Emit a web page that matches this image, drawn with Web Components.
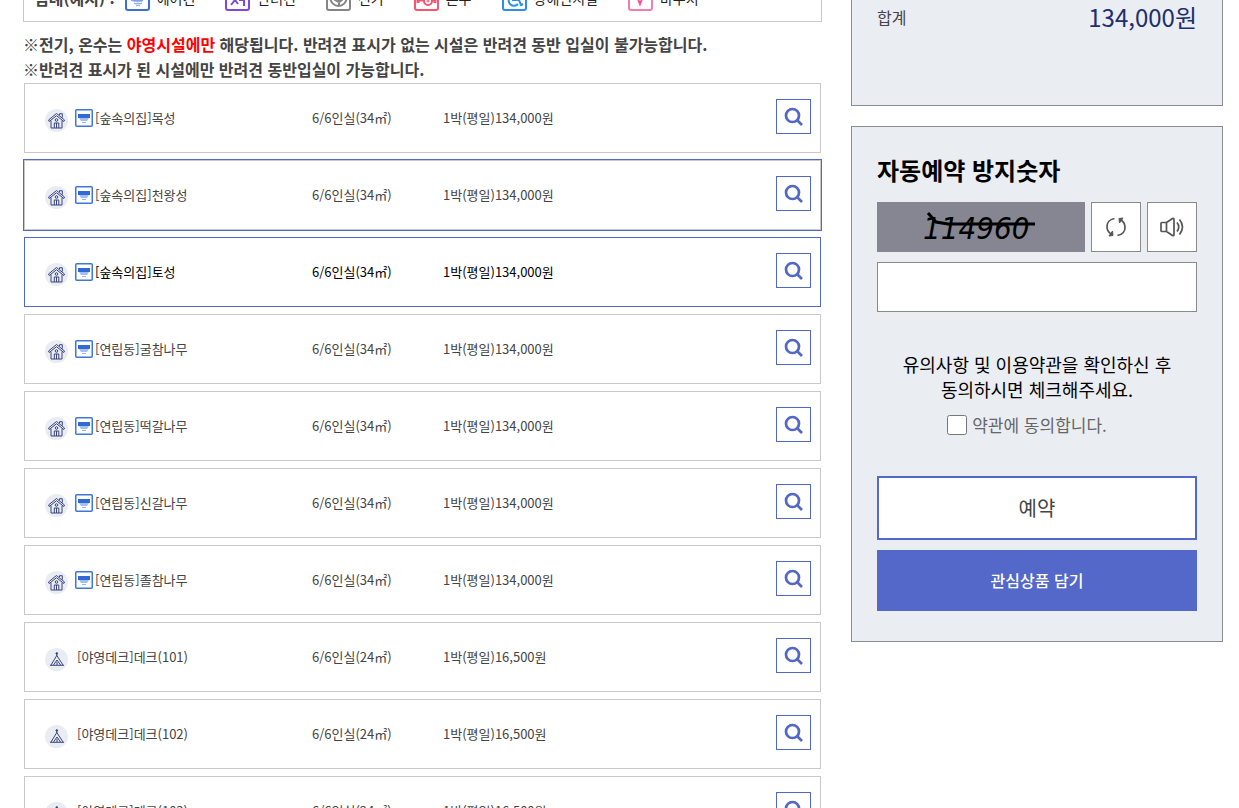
<!DOCTYPE html>
<html lang="ko">
<head>
<meta charset="utf-8">
<title>객실 예약</title>
<style>
    body {
        margin: 0;
        background: #fff;
        color: #444;
        font-family: "Noto Sans CJK KR", "Noto Sans", sans-serif;
        font-size: 16px;
    }
</style>
</head>
<body>
<reserve-page>
    <facility-legend slot="main">
        <legend-item icon="aircon">에어컨</legend-item>
        <legend-item icon="pet">반려견</legend-item>
        <legend-item icon="power">전기</legend-item>
        <legend-item icon="water">온수</legend-item>
        <legend-item icon="wheelchair">장애인시설</legend-item>
        <legend-item icon="voucher">바우처</legend-item>
    </facility-legend>
    <room-notice slot="main"></room-notice>
    <room-list slot="main"></room-list>
    <total-panel slot="side">134,000원</total-panel>
    <reserve-form slot="side"></reserve-form>
</reserve-page>

<script>
const icons = {
    aircon: `
        <svg viewBox="0 0 25 26" fill="none">
            <rect x="1" y="1" width="23" height="24" rx="2" stroke="#3c70d2" stroke-width="2"/>
            <path d="M4 7h17v6H4z" fill="#3c70d2"/>
            <path d="M6 13h14l-3 4H9z" fill="#a9c2ee"/>
            <path d="M6 15l2 1 2-1 2 1 2-1 2 1 2-1M9 18l2 1 2-1 2 1 2-1M11 21l2-1 2 1" stroke="#6f95de"/>
        </svg>`,
    pet: `
        <svg viewBox="0 0 25 26" fill="none" stroke="#8246d8">
            <rect x="1" y="1" width="23" height="24" rx="2" stroke-width="2"/>
            <path d="M6 20l4-5M10 15l3 4M14 15h5M19 12v9M8 8h4v6" stroke-width="2"/>
        </svg>`,
    power: `
        <svg viewBox="0 0 25 26" fill="none" stroke="#858585">
            <rect x="1" y="1" width="23" height="24" rx="2" stroke-width="2"/>
            <circle cx="12.500" cy="13" r="8" stroke-width="2"/>
            <path d="M13 8v13M9 12h7v3l-3 2-4-2z" stroke-width="2"/>
        </svg>`,
    water: `
        <svg viewBox="0 0 25 26" fill="none" stroke="#f5556f">
            <rect x="1" y="1" width="23" height="24" rx="2" stroke-width="2"/>
            <path d="M4 18v-3h5v-4h8v4h4v3" stroke-width="3"/>
            <circle cx="14" cy="16" r="4" fill="#fff" stroke-width="2"/>
            <circle cx="14" cy="16" r="1"/>
        </svg>`,
    wheelchair: `
        <svg viewBox="0 0 25 26" fill="none" stroke="#2c8fe5">
            <rect x="1" y="1" width="23" height="24" rx="2" stroke-width="2"/>
            <circle cx="11" cy="5" r="1"/>
            <path d="M11 7v8h6l2 5 2-1M8 12a5 5 0 1 0 8 7M11 11h5" stroke-width="2"/>
        </svg>`,
    voucher: `
        <svg viewBox="0 0 25 26" fill="none" stroke="#f67cb0">
            <rect x="1" y="1" width="23" height="24" rx="2" stroke-width="2"/>
            <path d="M8 9l4 10 4-10" stroke="#f0559a" stroke-width="2"/>
        </svg>`,
    airconSmall: `
        <svg viewBox="0 0 18 18" fill="none">
            <rect x=".75" y=".75" width="16.500" height="16.500" rx="1" stroke="#3f77d6" stroke-width="1.500"/>
            <path d="M3 5h12v4H3z" fill="#3269d3"/>
            <path d="M4 9h10l-2 3H6z" fill="#a3bff0"/>
            <path d="M7 13l1 1 1-1 1 1 1-1" stroke="#9db9ec"/>
        </svg>`,
    house: `
        <svg viewBox="0 0 23 23" fill="none" stroke="#39437f">
            <circle cx="11.500" cy="11.500" r="11.500" fill="#e9edf2" stroke="none"/>
            <path d="M4.200 12.500l-.700-1.500 8-6.500 8 6.500-.700 1.500-7.300-5.800zM14.500 6.200V4.700h2.800v3.900M6 11.700v7.300h11v-7.300M9.300 19v-5h4.500v5M11.500 14v5"/>
            <circle cx="11.500" cy="11" r="1.300"/>
        </svg>`,
    tent: `
        <svg viewBox="0 0 23 23" fill="none" stroke="#39437f">
            <circle cx="11.500" cy="11.500" r="11.500" fill="#e9edf2" stroke="none"/>
            <path d="M11.800 4.500v3.500M11.800 7.500L6 17M11.800 7.500L18 17M5 17.300h14M12 12l-3.500 5M12 12l3.500 5M12 14v3"/>
            <circle cx="11.800" cy="5.500" r=".8" fill="#39437f"/>
        </svg>`,
    search: `
        <svg viewBox="0 0 33 33" fill="none" stroke="#5267c7">
            <circle cx="15.500" cy="15.500" r="6.500" stroke-width="2.700"/>
            <path d="M20 20l5 5" stroke-width="2.700"/>
        </svg>`,
    refresh: `
        <svg viewBox="0 0 24 24" fill="none" stroke="#555" stroke-width="1.700">
            <path d="M10.500 3.500C5.500 4.300 2.700 8 3 12.300c.2 3 1.700 5.300 4.300 7M13.500 20.500c5-.8 7.800-4.500 7.500-8.800-.2-3-1.700-5.300-4.300-7"/>
            <path d="M5 21l4-.5-.5-4.500zM19 3l-4 .5.500 4.500z" fill="#555" stroke="#555" stroke-width="1"/>
        </svg>`,
    speaker: `
        <svg viewBox="0 0 26 24" fill="none" stroke="#555" stroke-width="1.700" stroke-linejoin="round">
            <path d="M8 7.500H3q-1 0-1 1v7q0 1 1 1h5M7.500 7.500v9l6 4q1.500.5 1.500-1v-15q0-1.500-1.500-1z"/>
            <path d="M18 7.500q3.500 4.500 0 9M20.500 4.500q6 7.500 0 15"/>
        </svg>`
}

const rooms = [
    { type: 'house', name: '[숲속의집]목성', size: '6/6인실(34㎡)', price: '1박(평일)134,000원' },
    { type: 'house', name: '[숲속의집]천왕성', size: '6/6인실(34㎡)', price: '1박(평일)134,000원', state: 'active' },
    { type: 'house', name: '[숲속의집]토성', size: '6/6인실(34㎡)', price: '1박(평일)134,000원', state: 'selected' },
    { type: 'house', name: '[연립동]굴참나무', size: '6/6인실(34㎡)', price: '1박(평일)134,000원' },
    { type: 'house', name: '[연립동]떡갈나무', size: '6/6인실(34㎡)', price: '1박(평일)134,000원' },
    { type: 'house', name: '[연립동]신갈나무', size: '6/6인실(34㎡)', price: '1박(평일)134,000원' },
    { type: 'house', name: '[연립동]졸참나무', size: '6/6인실(34㎡)', price: '1박(평일)134,000원' },
    { type: 'tent', name: '[야영데크]데크(101)', size: '6/6인실(24㎡)', price: '1박(평일)16,500원' },
    { type: 'tent', name: '[야영데크]데크(102)', size: '6/6인실(24㎡)', price: '1박(평일)16,500원' },
    { type: 'tent', name: '[야영데크]데크(103)', size: '6/6인실(24㎡)', price: '1박(평일)16,500원' }
]

customElements.define(
    'reserve-page',
    class extends HTMLElement {
        constructor() {
            super()

            this.attachShadow({ mode: 'open' }).innerHTML = `
                <style>
                    :host {
                        display: grid;
                        grid-template-columns: 1fr 30%;
                        column-gap: 29px;
                        align-items: start;
                        margin: -26px 16px 20px 23px;
                    }
                    main {
                        min-width: 0;
                    }
                    aside {
                        display: grid;
                        gap: 20px;
                    }
                    @media (min-width: 1200px) {
                        :host {
                            grid-template-columns: 1fr 372px;
                        }
                    }
                </style>
                <main><slot name="main"></slot></main>
                <aside><slot name="side"></slot></aside>
            `
        }
    }
)

customElements.define(
    'facility-legend',
    class extends HTMLElement {
        constructor() {
            super()

            this.attachShadow({ mode: 'open' }).innerHTML = `
                <style>
                    :host {
                        display: flex;
                        align-items: center;
                        gap: 30px;
                        padding: 10px;
                        border: 1px solid #c9c9c9;
                        line-height: 26px;
                    }
                    b {
                        margin-right: -20px;
                    }
                </style>
                <b>범례(예시) :</b>
                <slot></slot>
            `
        }
    }
)

customElements.define(
    'legend-item',
    class extends HTMLElement {
        constructor() {
            super()

            this.shadow = this.attachShadow({ mode: 'open' })
        }

        connectedCallback() {
            this.shadow.innerHTML = `
                <style>
                    :host {
                        display: flex;
                        align-items: center;
                        gap: 7px;
                        color: #222;
                        font-size: 14px;
                        white-space: nowrap;
                    }
                    svg {
                        width: 25px;
                        height: 26px;
                    }
                </style>
                ${icons[this.getAttribute('icon')]}
                <span><slot></slot></span>
            `
        }
    }
)

customElements.define(
    'room-notice',
    class extends HTMLElement {
        constructor() {
            super()

            this.attachShadow({ mode: 'open' }).innerHTML = `
                <style>
                    :host {
                        display: block;
                        margin: 10px 0 1px;
                        font-weight: 700;
                        line-height: 25px;
                    }
                    p {
                        margin: 0;
                    }
                    em {
                        color: #f00;
                        font-style: normal;
                    }
                </style>
                <p>※전기, 온수는 <em>야영시설에만</em> 해당됩니다. 반려견 표시가 없는 시설은 반려견 동반 입실이 불가능합니다.</p>
                <p>※반려견 표시가 된 시설에만 반려견 동반입실이 가능합니다.</p>
            `
        }
    }
)

customElements.define(
    'room-item',
    class extends HTMLElement {
        constructor() {
            super()

            this.shadow = this.attachShadow({ mode: 'open' })
        }

        setRoom(room) {
            if (room.state) {
                this.classList.add(room.state)
            }

            this.shadow.innerHTML = `
                <style>
                    :host {
                        display: grid;
                        grid-template-columns: 267fr 131fr 333fr 35px;
                        align-items: center;
                        box-sizing: border-box;
                        min-height: 70px;
                        padding: 0 9px 0 20px;
                        border: 1px solid #c9c9c9;
                        font-size: 13px;
                        line-height: 20px;
                    }
                    :host(.active) {
                        outline: 1px solid #5267c7;
                    }
                    :host(.selected) {
                        border-color: #5267c7;
                        color: #000;
                    }
                    .name {
                        display: flex;
                        align-items: center;
                    }
                    .type {
                        display: flex;
                        margin: 4px 7px 0 0;
                    }
                    .type svg {
                        width: 23px;
                        height: 23px;
                    }
                    .option svg {
                        display: block;
                        width: 18px;
                        height: 18px;
                    }
                    a {
                        padding-left: 2px;
                        color: inherit;
                        text-decoration: none;
                    }
                    button {
                        width: 35px;
                        height: 35px;
                        margin: 0 0 3px;
                        padding: 0;
                        border: 1px solid #5267c7;
                        background: #fff;
                        cursor: pointer;
                    }
                    button svg {
                        display: block;
                        width: 33px;
                        height: 33px;
                    }
                </style>
                <div class="name">
                    <span class="type">${icons[room.type]}</span>
                    ${room.type === 'house' ? `<span class="option">${icons.airconSmall}</span>` : ''}
                    <a href="#">${room.name}</a>
                </div>
                <span>${room.size}</span>
                <span>${room.price}</span>
                <button type="button" aria-label="상세보기">${icons.search}</button>
            `
        }
    }
)

customElements.define(
    'room-list',
    class extends HTMLElement {
        constructor() {
            super()

            this.shadow = this.attachShadow({ mode: 'open' })
            this.shadow.innerHTML = `
                <style>
                    :host {
                        display: grid;
                        gap: 7px;
                        margin: 0 1px;
                    }
                </style>
            `
        }

        connectedCallback() {
            for (const room of rooms) {
                const elem = document.createElement('room-item')

                elem.setRoom(room)
                this.shadow.appendChild(elem)
            }
        }
    }
)

customElements.define(
    'total-panel',
    class extends HTMLElement {
        constructor() {
            super()

            this.attachShadow({ mode: 'open' }).innerHTML = `
                <style>
                    :host {
                        display: flex;
                        justify-content: space-between;
                        padding: 25px 25px 71px;
                        border: 1px solid #8a8c95;
                        background: #eaedf2;
                        line-height: 34px;
                    }
                    strong {
                        color: #202d6e;
                        font-size: 24px;
                        font-weight: 400;
                    }
                </style>
                <span>합계</span>
                <strong><slot></slot></strong>
            `
        }
    }
)

customElements.define(
    'captcha-image',
    class extends HTMLElement {
        constructor() {
            super()

            this.attachShadow({ mode: 'open' }).innerHTML = `
                <style>
                    :host {
                        display: block;
                        height: 50px;
                        background: #858691;
                    }
                    svg {
                        display: block;
                        width: 208px;
                        height: 50px;
                    }
                    text {
                        font: oblique 31px "DejaVu Sans Condensed", "DejaVu Sans", sans-serif;
                    }
                </style>
                <svg viewBox="0 0 208 50">
                    <text x="46" y="37">114960</text>
                    <path d="M51 11l8 9 12 2h87" fill="none" stroke="#000" stroke-width="3"/>
                </svg>
            `
        }
    }
)

customElements.define(
    'reserve-form',
    class extends HTMLElement {
        constructor() {
            super()

            this.attachShadow({ mode: 'open' }).innerHTML = `
                <style>
                    :host {
                        display: block;
                        padding: 23px 25px 30px;
                        border: 1px solid #8a8c95;
                        background: #eaedf2;
                    }
                    h2 {
                        margin: 0 0 12px;
                        color: #000;
                        font-size: 24px;
                        line-height: 40px;
                    }
                    h2 label {
                        display: block;
                    }
                    .captcha {
                        display: grid;
                        grid-template-columns: 1fr 50px 50px;
                        gap: 6px;
                        margin-bottom: 10px;
                    }
                    button {
                        box-sizing: border-box;
                        padding: 0 0 2px;
                        font: inherit;
                        cursor: pointer;
                    }
                    .captcha button {
                        display: grid;
                        place-items: center;
                        height: 50px;
                        padding: 0;
                        border: 1px solid #8a8a8a;
                        background: #fff;
                    }
                    .captcha svg {
                        width: 26px;
                        height: 24px;
                    }
                    #answer {
                        display: block;
                        box-sizing: border-box;
                        width: 100%;
                        height: 50px;
                        padding: 0 10px;
                        border: 1px solid #8a8a8a;
                        border-radius: 0;
                        background: #fff;
                        font: inherit;
                    }
                    p {
                        margin: 40px 0 10px;
                        color: #000;
                        font-size: 18px;
                        line-height: 25px;
                        text-align: center;
                    }
                    .agree {
                        display: flex;
                        justify-content: center;
                        align-items: center;
                        gap: 5px;
                        margin-bottom: 38px;
                        padding-right: 20px;
                        color: #666;
                        font-size: 17px;
                        line-height: 26px;
                    }
                    .agree input {
                        width: 20px;
                        height: 20px;
                        margin: 0;
                    }
                    .reserve,
                    .wish {
                        display: block;
                        width: 100%;
                    }
                    .reserve {
                        height: 64px;
                        margin-bottom: 10px;
                        border: 2px solid #5368c8;
                        background: #fff;
                        color: #444;
                        font-size: 20px;
                    }
                    .wish {
                        height: 61px;
                        border: 0;
                        background: #5368c8;
                        color: #fff;
                        font-weight: 500;
                    }
                </style>
                <h2><label for="answer">자동예약 방지숫자</label></h2>
                <div class="captcha">
                    <captcha-image></captcha-image>
                    <button type="button" aria-label="새로고침">${icons.refresh}</button>
                    <button type="button" aria-label="음성듣기">${icons.speaker}</button>
                </div>
                <input id="answer" type="text">
                <p>유의사항 및 이용약관을 확인하신 후<br>동의하시면 체크해주세요.</p>
                <div class="agree">
                    <input id="agree" type="checkbox">
                    <label for="agree">약관에 동의합니다.</label>
                </div>
                <button type="button" class="reserve">예약</button>
                <button type="button" class="wish">관심상품 담기</button>
            `
        }
    }
)
</script>
</body>
</html>
